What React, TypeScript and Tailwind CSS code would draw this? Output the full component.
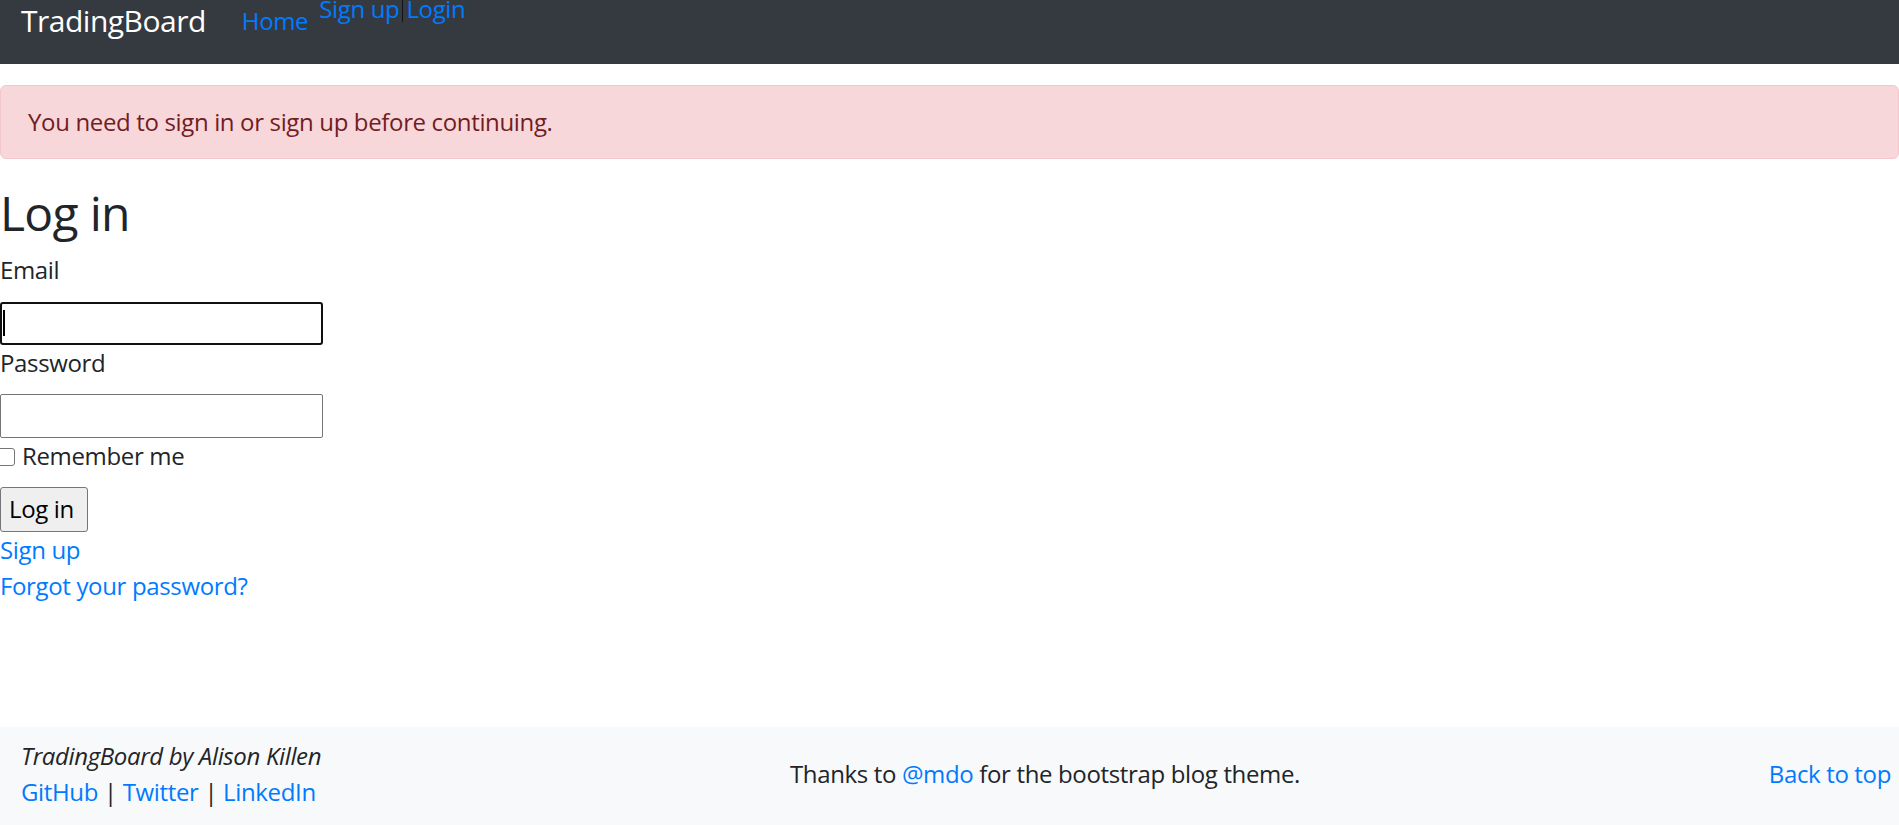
import React from "react";

export default function App() {
  return (
    <div className="min-h-screen bg-white font-['Open_Sans',sans-serif] text-[24px] leading-[36px] tracking-[-0.35px] text-[#212529]">
      <nav className="flex h-[64px] items-start bg-[#343a40] pl-[21px]">
        <a className="mt-[-2px] text-[30px] leading-[45px] tracking-[-0.5px] text-white">TradingBoard</a>
        <a className="ml-[36px] mt-[3px] text-[#007bff]">Home</a>
        <div className="ml-[11px] mt-[-9px] flex items-start">
          <a className="text-[#007bff]">Sign up</a>
          <span className="mx-[3px] mt-[9px] h-[22px] w-px bg-[#111315]" />
          <a className="text-[#007bff]">Login</a>
        </div>
      </nav>

      <div className="mt-[21px] mb-[25px] rounded-[6px] border border-[#f5c6cb] bg-[#f8d7da] py-[18px] pl-[27px] text-[#721c24]">
        You need to sign in or sign up before continuing.
      </div>

      <h1 className="mb-[10px] text-[48px] font-normal leading-[57.6px] tracking-[-0.7px] text-[#212529]">Log in</h1>

      <form className="flex flex-col items-start">
        <label className="block">Email</label>
        <div className="mt-[14px] flex h-[43px] w-[323px] items-center rounded-[3px] border-2 border-[#101010] bg-white pl-[1px]">
          <span className="h-[26px] w-[2px] bg-black" />
        </div>
        <label className="block">Password</label>
        <div className="mt-[13px] h-[44px] w-[323px] rounded-[2px] border border-[#767676] bg-white" />
        <div className="flex items-center">
          <span className="ml-[-3px] mt-[2px] h-[18px] w-[18px] rounded-[3px] border border-[#767676] bg-white" />
          <span className="ml-[7px]">Remember me</span>
        </div>
        <button
          type="button"
          className="mt-[13px] flex h-[45px] items-center rounded-[3px] border border-[#767676] bg-[#efefef] pl-[8px] pr-[13px] text-black"
        >
          Log in
        </button>
        <a className="text-[#007bff]">Sign up</a>
        <a className="text-[#007bff]">Forgot your password?</a>
      </form>

      <footer className="mt-[123px] flex items-center justify-between bg-[#f8f9fa] pt-[11px] pb-[15px] pl-[21px] pr-[8px]">
        <div className="flex flex-col">
          <span className="italic">TradingBoard by Alison Killen</span>
          <span>
            <a className="text-[#007bff]">GitHub</a> | <a className="text-[#007bff]">Twitter</a> |{" "}
            <a className="text-[#007bff]">LinkedIn</a>
          </span>
        </div>
        <p>
          Thanks to <a className="text-[#007bff]">@mdo</a> for the bootstrap blog theme.
        </p>
        <a className="text-[#007bff]">Back to top</a>
      </footer>
    </div>
  );
}
